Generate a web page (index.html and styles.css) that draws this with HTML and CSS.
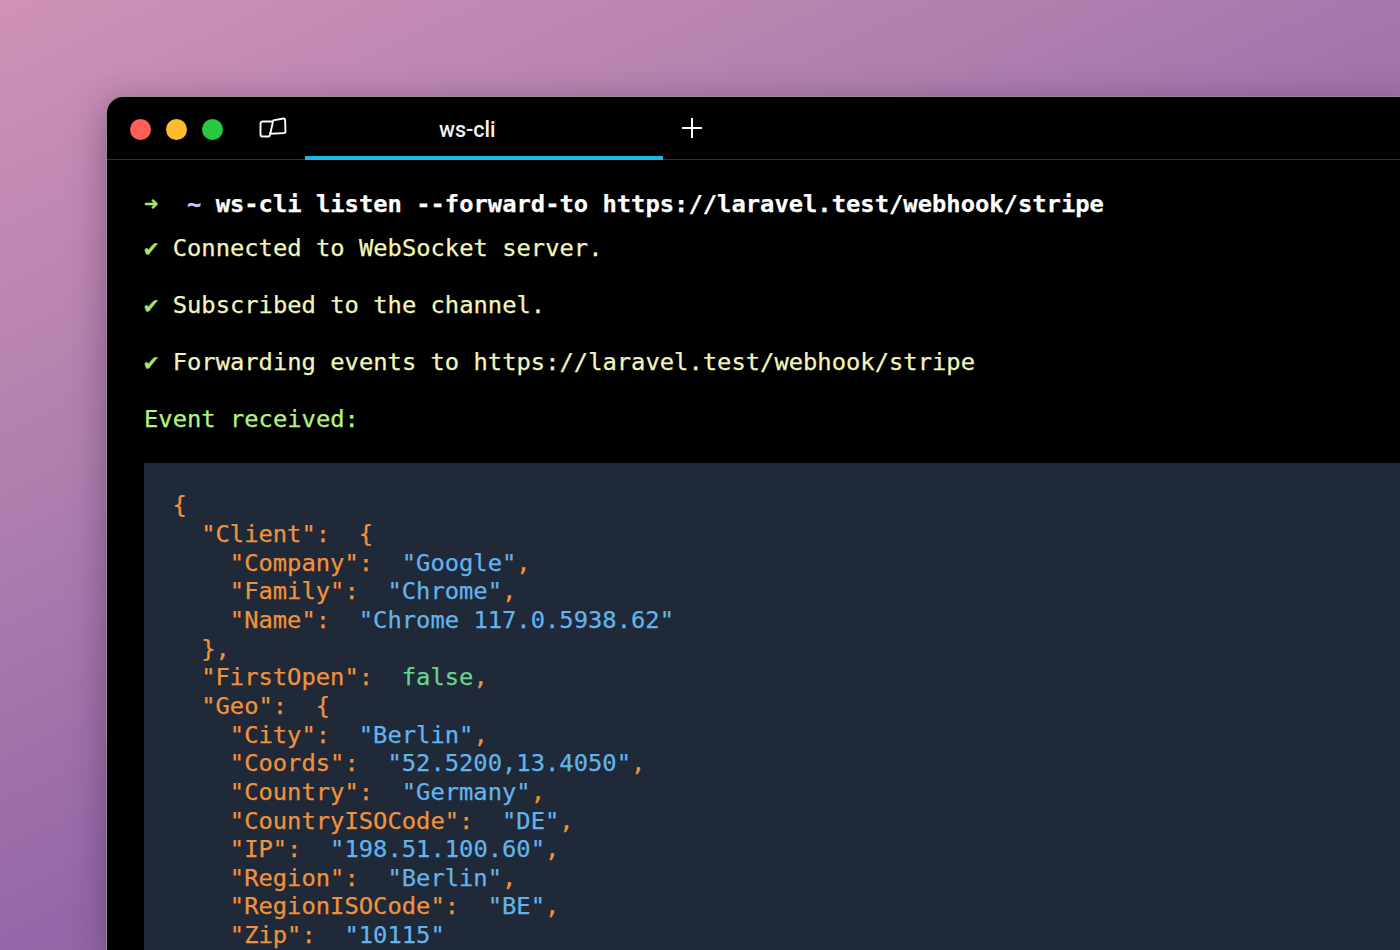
FILE: index.html
```html
<!DOCTYPE html>
<html lang="en">
<head>
<meta charset="utf-8">
<title>ws-cli</title>
<link rel="stylesheet" href="styles.css">
</head>
<body>
<main class="window">
  <header class="titlebar">
    <div class="lights">
      <span class="light red"></span>
      <span class="light yellow"></span>
      <span class="light green"></span>
    </div>
    <svg class="panes" width="28" height="22" viewBox="0 0 28 22" fill="none" stroke="#fff" stroke-width="1.9" stroke-linejoin="round" stroke-linecap="round">
      <path d="M12.800 4.500H3.500a2 2 0 0 0-2 2v11a2 2 0 0 0 2 2H9a2 2 0 0 0 2-1.700l.3-1.800"/>
      <path d="M14.200 3.400l10-1.900a1.600 1.600 0 0 1 1.900 1.600l.4 11.400a1.500 1.500 0 0 1-1.500 1.600l-13.700.7z"/>
    </svg>
    <div class="tab"><span>ws-cli</span></div>
    <svg class="plus" width="20" height="20" viewBox="0 0 20 20" stroke="#fff" stroke-width="2"><path d="M10 0v20M0 10h20"/></svg>
  </header>
  <section class="terminal">
    <p class="prompt"><span class="arrow">➜</span>  <span class="tilde">~</span> ws-cli listen --forward-to https://laravel.test/webhook/stripe</p>
    <p class="ok"><span class="check">✔</span> Connected to WebSocket server.</p>
    <p class="ok"><span class="check">✔</span> Subscribed to the channel.</p>
    <p class="ok"><span class="check">✔</span> Forwarding events to https://laravel.test/webhook/stripe</p>
    <p class="event">Event received:</p>
    <pre class="json"><span class="k">{
  "Client":  {
    "Company":  </span><span class="s">"Google"</span><span class="k">,</span>
<span class="k">    "Family":  </span><span class="s">"Chrome"</span><span class="k">,</span>
<span class="k">    "Name":  </span><span class="s">"Chrome 117.0.5938.62"</span>
<span class="k">  },
  "FirstOpen":  </span><span class="b">false</span><span class="k">,</span>
<span class="k">  "Geo":  {
    "City":  </span><span class="s">"Berlin"</span><span class="k">,</span>
<span class="k">    "Coords":  </span><span class="s">"52.5200,13.4050"</span><span class="k">,</span>
<span class="k">    "Country":  </span><span class="s">"Germany"</span><span class="k">,</span>
<span class="k">    "CountryISOCode":  </span><span class="s">"DE"</span><span class="k">,</span>
<span class="k">    "IP":  </span><span class="s">"198.51.100.60"</span><span class="k">,</span>
<span class="k">    "Region":  </span><span class="s">"Berlin"</span><span class="k">,</span>
<span class="k">    "RegionISOCode":  </span><span class="s">"BE"</span><span class="k">,</span>
<span class="k">    "Zip":  </span><span class="s">"10115"</span></pre>
  </section>
</main>
</body>
</html>
```
FILE: styles.css
```css
html, body {
  margin: 0;
  height: 950px;
  overflow: hidden;
}
body {
  box-sizing: border-box;
  display: flex;
  padding: 97px 0 0 107px;
  background: linear-gradient(155deg, #cf92b5 0%, #b07fae 31%, #9468a8 59%, #7a5a98 100%);
}
.window {
  flex: 1;
  display: flex;
  flex-direction: column;
  background: #000;
  border-radius: 16px 0 0 0;
  box-shadow: 0 0 0 1px rgba(150, 145, 150, .9), 0 8px 36px rgba(40, 20, 50, .4);
  font-family: "DejaVu Sans Mono", "Liberation Mono", monospace;
  font-size: 23.8px;
}
.titlebar {
  box-sizing: border-box;
  flex: none;
  height: 63px;
  display: flex;
  align-items: center;
  padding-left: 22.5px;
  border-bottom: 1px solid #333;
}
.lights {
  display: flex;
  gap: 15px;
  margin-top: 3px;
}
.light {
  width: 21px;
  height: 21px;
  border-radius: 50%;
}
.red { background: #ff5f57; }
.yellow { background: #febc2e; }
.green { background: #28c840; }
.panes {
  margin-left: 36.5px;
}
.tab {
  box-sizing: border-box;
  width: 358px;
  height: 62px;
  margin-left: 18px;
  padding: 19px 0 0 134px;
  border-bottom: 4px solid #1ab8e4;
  margin-bottom: -1px;
  color: #f2f2f2;
  font-family: Roboto, "Liberation Sans", sans-serif;
  font-weight: 500;
  font-size: 21.5px;
  line-height: 26px;
}
.plus {
  margin-left: 19px;
  margin-bottom: 1px;
}
.terminal {
  flex: 1;
  display: flex;
  flex-direction: column;
  padding: 30px 0 0 37px;
  -webkit-text-stroke: .25px currentColor;
}
.terminal p {
  margin: 0;
  white-space: pre;
  line-height: 29px;
}
.prompt {
  color: #fff;
  font-weight: 700;
  margin-bottom: 15px !important;
}
.arrow { color: #a6e86c; }
.tilde { color: #c9c8ff; }
.ok {
  color: #f2f6bc;
  margin-bottom: 28px !important;
}
.check { color: #a6e86c; }
.event {
  color: #b4f47e;
  margin-bottom: 29px !important;
}
.json {
  flex: 1;
  margin: 0;
  padding: 28.3px 0 0 28.5px;
  background: #1f2937;
  line-height: 28.65px;
  font-family: inherit;
  font-size: inherit;
}
.k { color: #f0923c; }
.s { color: #63b3ed; }
.b { color: #68d391; }
```
